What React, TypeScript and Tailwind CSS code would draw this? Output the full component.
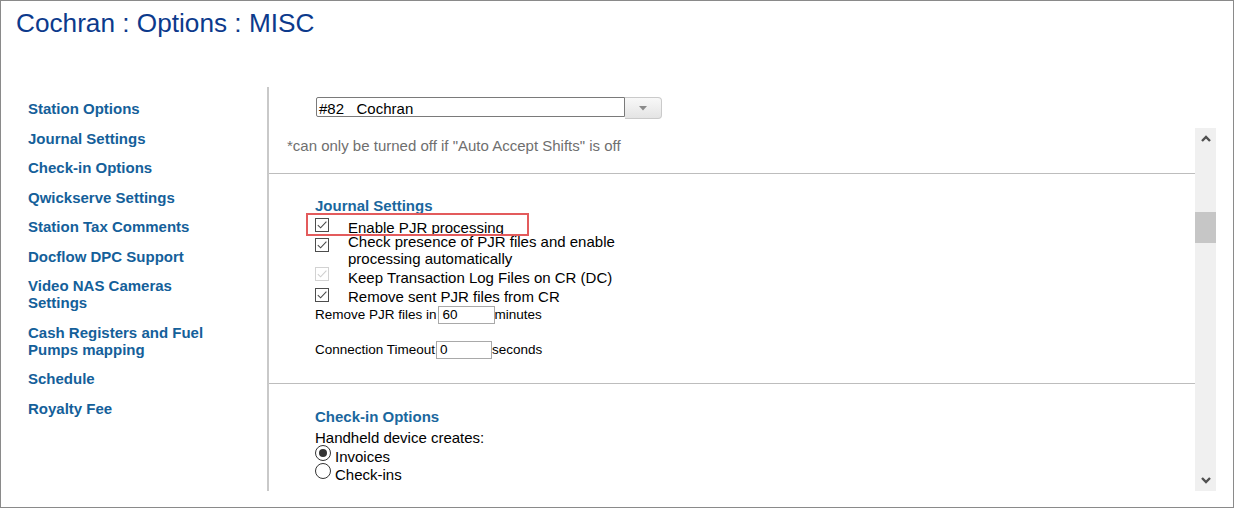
import clsx from 'clsx';

const navItems = [
    'Station Options',
    'Journal Settings',
    'Check-in Options',
    'Qwickserve Settings',
    'Station Tax Comments',
    'Docflow DPC Support',
    'Video NAS Cameras Settings',
    'Cash Registers and Fuel Pumps mapping',
    'Schedule',
    'Royalty Fee',
];

function CheckBox({ disabled, className }: { disabled?: boolean; className?: string }) {
    return (
        <span
            className={clsx(
                'w-[14px] h-[14px] border bg-white flex items-center justify-center shrink-0',
                disabled ? 'border-[#d2d2d2]' : 'border-[#4d4d4d]',
                className
            )}
        >
            <svg width="12" height="12" viewBox="0 0 12 12">
                <path
                    d="M1.8 6.2 L4.6 8.8 L10.4 2.6"
                    fill="none"
                    stroke={disabled ? '#cfcfcf' : '#4a4a4a'}
                    strokeWidth="1.1"
                />
            </svg>
        </span>
    );
}

function Radio({ checked }: { checked?: boolean }) {
    return (
        <span className="w-[16px] h-[16px] rounded-full border border-[#333] bg-white flex items-center justify-center shrink-0 mt-[-3px]">
            {checked && <span className="w-[8px] h-[8px] rounded-full bg-[#333]" />}
        </span>
    );
}

function ScrollBar() {
    return (
        <div className="w-[21px] bg-[#f0f0f0] flex flex-col items-center">
            <svg width="10" height="7" viewBox="0 0 10 7" className="mt-[7px]">
                <path d="M1 6 L5 2 L9 6" fill="none" stroke="#505050" strokeWidth="2.4" />
            </svg>
            <div className="w-full h-[31px] bg-[#c6c6c6] mt-[70px]" />
            <div className="flex-1" />
            <svg width="10" height="7" viewBox="0 0 10 7" className="mb-[7px]">
                <path d="M1 1 L5 5 L9 1" fill="none" stroke="#505050" strokeWidth="2.4" />
            </svg>
        </div>
    );
}

export default function App() {
    return (
        <div className="relative w-[1234px] h-[508px] border border-[#8a8a8a] bg-white flex flex-col font-['Liberation_Sans',Arial,sans-serif] text-black">
            <h1 className="h-[86px] pl-[15px] pt-[7px] text-[26.2px] leading-[30px] text-[#0c3a8c] font-normal">
                Cochran : Options : MISC
            </h1>

            <div className="flex h-[404px]">
                <nav className="w-[266px] pl-[27px] pt-[13px]">
                    <ul className="flex flex-col gap-[12.5px] w-[190px]">
                        {navItems.map((item) => (
                            <li key={item} className="text-[15px] leading-[17px] font-bold text-[#14609a]">
                                {item}
                            </li>
                        ))}
                    </ul>
                </nav>
                <div className="w-[2px] bg-[#c9c9c9]" />

                <div className="flex-1 flex flex-col pr-[17px]">
                    <div className="h-[41px] pl-[47px] pt-[10px]">
                        <div className="flex items-start">
                            <div className="w-[309px] h-[20px] border border-[#7a7a7a] rounded-l-[2px] pl-[2px] pt-[1.5px] text-[15px] leading-[17px]">
                                #82&nbsp;&nbsp;&nbsp;Cochran
                            </div>
                            <div className="w-[37px] h-[22px] border border-[#cacaca] border-l-0 rounded-r-[4px] bg-gradient-to-b from-[#f8f8f8] to-[#e4e4e4] flex items-center justify-center">
                                <svg width="8" height="5" viewBox="0 0 8 5">
                                    <path d="M0 0 L8 0 L4 4.5 Z" fill="#8a8a8a" />
                                </svg>
                            </div>
                        </div>
                    </div>

                    <div className="flex flex-1 min-h-0">
                        <div className="flex-1 overflow-hidden">
                            <p className="pl-[18px] pt-[9px] text-[15px] leading-[17px] text-[#6f6f6f]">
                                *can only be turned off if "Auto Accept Shifts" is off
                            </p>
                            <div className="mt-[19px] border-t border-[#bdbdbd]" />

                            <section className="pl-[46px]">
                                <h3 className="mt-[23px] text-[15px] leading-[17px] font-bold text-[#1a679e]">
                                    Journal Settings
                                </h3>
                                <div className="mt-[8.5px] h-[10px] flex items-start text-[15px] leading-[10px]">
                                    <span className="w-[33px]"><CheckBox className="mt-[-5px]" /></span>
                                    <span>Enable PJR processing</span>
                                </div>
                                <div className="flex items-start text-[15px] leading-[17px]">
                                    <span className="w-[33px]"><CheckBox className="mt-[5px]" /></span>
                                    <span>
                                        Check presence of PJR files and enable
                                        <br />
                                        processing automatically
                                    </span>
                                </div>
                                <div className="mt-[2px] flex items-start text-[15px] leading-[17px]">
                                    <span className="w-[33px]"><CheckBox disabled className="mt-[-1.5px]" /></span>
                                    <span>Keep Transaction Log Files on CR (DC)</span>
                                </div>
                                <div className="mt-[2px] flex items-start text-[15px] leading-[17px]">
                                    <span className="w-[33px]"><CheckBox className="mt-[0.5px]" /></span>
                                    <span>Remove sent PJR files from CR</span>
                                </div>
                                <div className="mt-[1.5px] h-[18px] flex items-center text-[13.5px]">
                                    <span>Remove PJR files in</span>
                                    <span className="w-[57px] h-[18px] border border-[#a9a9a9] pl-[4px] leading-[16px] ml-[1px]">60</span>
                                    <span>minutes</span>
                                </div>
                                <div className="mt-[17px] h-[18px] flex items-center text-[13.5px]">
                                    <span>Connection Timeout</span>
                                    <span className="w-[56px] h-[18px] border border-[#a9a9a9] pl-[3px] leading-[16px] ml-[1px]">0</span>
                                    <span>seconds</span>
                                </div>
                            </section>

                            <div className="mt-[24px] border-t border-[#bdbdbd]" />

                            <section className="pl-[46px]">
                                <h3 className="mt-[24px] text-[15px] leading-[17px] font-bold text-[#1a679e]">
                                    Check-in Options
                                </h3>
                                <p className="mt-[3.5px] text-[15px] leading-[17px]">Handheld device creates:</p>
                                <div className="mt-[2px] flex items-start gap-[4px] text-[15px] leading-[17px]">
                                    <Radio checked />
                                    <span>Invoices</span>
                                </div>
                                <div className="mt-[1px] flex items-start gap-[4px] text-[15px] leading-[17px]">
                                    <Radio />
                                    <span>Check-ins</span>
                                </div>
                            </section>
                        </div>
                        <ScrollBar />
                    </div>
                </div>
            </div>

            <div className="flex-1" />

            <div className="absolute left-[305px] top-[212px] w-[223px] h-[23px] border-2 border-[#e35b5c]" />
        </div>
    );
}
